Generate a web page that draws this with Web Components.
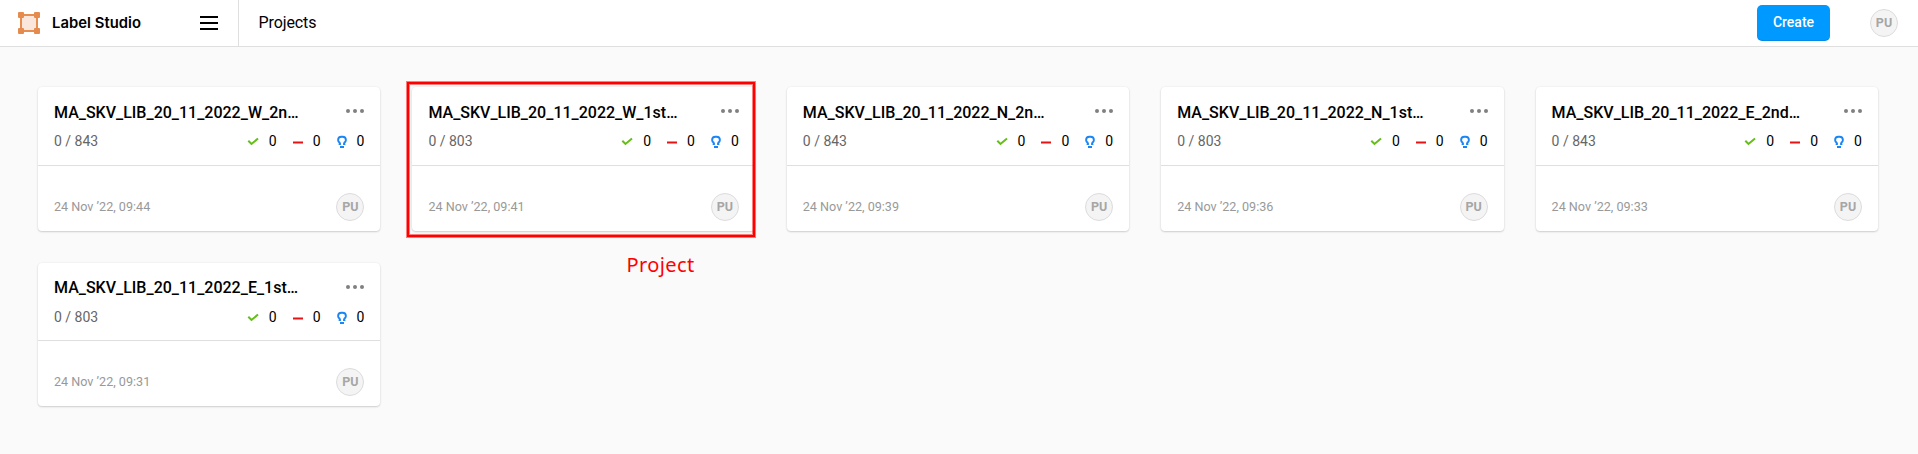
<!DOCTYPE html>
<html lang="en">
<head>
<meta charset="utf-8">
<title>Label Studio</title>
<style>
html,body{margin:0;height:100%}
body{background:#fafafa;font-family:Roboto,"Liberation Sans",sans-serif;font-size:16px;color:#000;overflow:hidden}
</style>
</head>
<body>
<ls-app></ls-app>
<script>
const define = (name, html, setup) => customElements.define(name, class extends HTMLElement {
  constructor() {
    super();
    this.attachShadow({mode: 'open'});
  }
  connectedCallback() {
    const t = document.createElement('template');
    t.innerHTML = html;
    this.shadowRoot.replaceChildren(t.content.cloneNode(true));
    if (setup) setup(this, this.shadowRoot);
  }
});

define('ls-avatar', `<style>
:host{box-sizing:border-box;display:flex;align-items:center;justify-content:center;width:28px;height:28px;border-radius:50%;background:#f4f4f4;border:1px solid #dcdcdc;color:#a6a6a6;font-size:12.5px;font-weight:700;line-height:14px;flex:none}
</style><span><slot></slot></span>`);

define('ls-header', `<style>
:host{display:flex;box-sizing:border-box;height:47px;background:#fff;border-bottom:1px solid #dfdfdf;align-items:stretch}
.brand{box-sizing:border-box;width:239px;border-right:1px solid #dfdfdf;display:flex;align-items:center;padding:0 20px 0 18px}
.name{font:600 14.8px/20px Inter,sans-serif;letter-spacing:.05px;margin-left:12px;flex:1;white-space:nowrap}
.burger{display:flex;flex-direction:column;gap:4px;width:18px}
.burger i{height:2px;background:#000}
.crumb{padding:0 0 1px 19.5px;letter-spacing:-.1px;display:flex;align-items:center;flex:1}
.right{display:flex;align-items:center;gap:40px;padding-right:20px}
button{all:unset;box-sizing:border-box;width:73px;height:36px;border-radius:5px;background:#0099ff;box-shadow:inset 0 -1px 0 rgba(0,0,0,.1);color:#fff;font-weight:500;font-size:14px;line-height:34px;text-align:center;padding-bottom:2px}
</style>
<div class="brand">
<svg width="22" height="22" viewBox="0 0 22 22"><rect x="3" y="3" width="16" height="16" fill="#fae6da" stroke="#e78d4f" stroke-width="2"/><g fill="#e58b4d"><rect width="6" height="6" rx="1"/><rect x="16" width="6" height="6" rx="1"/><rect y="16" width="6" height="6" rx="1"/><rect x="16" y="16" width="6" height="6" rx="1"/></g></svg>
<span class="name">Label Studio</span><div class="burger"><i></i><i></i><i></i></div></div>
<div class="crumb">Projects</div>
<div class="right"><button>Create</button><ls-avatar>PU</ls-avatar></div>`);

define('ls-card', `<style>
:host{display:flex;flex-direction:column;box-sizing:border-box;height:143.5px;background:#fff;border-radius:4px;box-shadow:0 0 2px rgba(0,0,0,.08),0 1px 2px rgba(0,0,0,.16);position:relative}
.top{box-sizing:border-box;height:78.9px;border-bottom:1px solid #dfdfdf;padding:14.6px 16px 0}
.title{display:flex;justify-content:space-between;height:22px;line-height:22px;font-weight:500;white-space:nowrap}
.title svg{margin-top:7.8px}
.sum{display:flex;justify-content:space-between;margin-top:7.5px;height:20px;line-height:20px;font-size:14px;color:#666}
.stats{display:flex;color:#000}
.stats span{display:flex;align-items:center}
.stats svg{margin-right:9px}
.b,.c{margin-left:13px}
.bottom{flex:1;display:flex;align-items:flex-start;justify-content:space-between;padding:27.1px 16px 0;font-size:12.6px;line-height:28px;color:#999}
:host([marked])::after{content:"";position:absolute;left:-5.4px;top:-5px;width:344px;height:151px;border:2px solid #f00;box-shadow:0 0 0 1px rgba(255,0,0,.5),inset 0 0 0 1px rgba(255,0,0,.5)}
</style>
<div class="top"><div class="title"><slot></slot><svg width="18" height="4" fill="#808080"><circle cx="2" cy="2" r="2"/><circle cx="9" cy="2" r="2"/><circle cx="16" cy="2" r="2"/></svg></div>
<div class="sum"><div class="count"></div><div class="stats">
<span><svg width="14" height="14"><path d="M2.3 6.7 5.5 10 12 4.5" fill="none" stroke="#64be17" stroke-width="2"/></svg>0</span>
<span class="b"><svg width="14" height="14"><path d="M3 7.5h10v2H3z" fill="#e51313"/></svg>0</span>
<span class="c"><svg width="14" height="14"><path d="M6.9 10H5.6V8.6C4.3 7.8 4.1 6.7 4.1 6A3.5 3.2 0 0 1 7.5 2.8H8.5A3.5 3.2 0 0 1 11.9 6C11.9 6.7 11.7 7.8 10.4 8.6V10H9.1" fill="none" stroke="#1a85f5" stroke-width="1.9"/><path d="M6 12h4v2H6z" fill="#1a85f5"/></svg>0</span>
</div></div></div>
<div class="bottom"><span class="date"></span><ls-avatar>PU</ls-avatar></div>`, (host, root) => {
  root.querySelector('.count').textContent = host.getAttribute('count');
  root.querySelector('.date').textContent = host.getAttribute('date');
});

define('ls-app', `<style>
:host{display:block}
main{display:grid;grid-template-columns:repeat(5,1fr);gap:32px;padding:40px 40px 0 38px}
.note{position:absolute;left:626.5px;top:252px;color:#f00;font:20px/26px "Noto Sans",sans-serif;letter-spacing:.4px}
</style><ls-header></ls-header><main>
<ls-card count="0 / 843" date="24 Nov ’22, 09:44">MA_SKV_LIB_20_11_2022_W_2n…</ls-card>
<ls-card marked count="0 / 803" date="24 Nov ’22, 09:41">MA_SKV_LIB_20_11_2022_W_1st…</ls-card>
<ls-card count="0 / 843" date="24 Nov ’22, 09:39">MA_SKV_LIB_20_11_2022_N_2n…</ls-card>
<ls-card count="0 / 803" date="24 Nov ’22, 09:36">MA_SKV_LIB_20_11_2022_N_1st…</ls-card>
<ls-card count="0 / 843" date="24 Nov ’22, 09:33">MA_SKV_LIB_20_11_2022_E_2nd…</ls-card>
<ls-card count="0 / 803" date="24 Nov ’22, 09:31">MA_SKV_LIB_20_11_2022_E_1st…</ls-card>
</main><div class="note">Project</div>`);
</script>
</body>
</html>
